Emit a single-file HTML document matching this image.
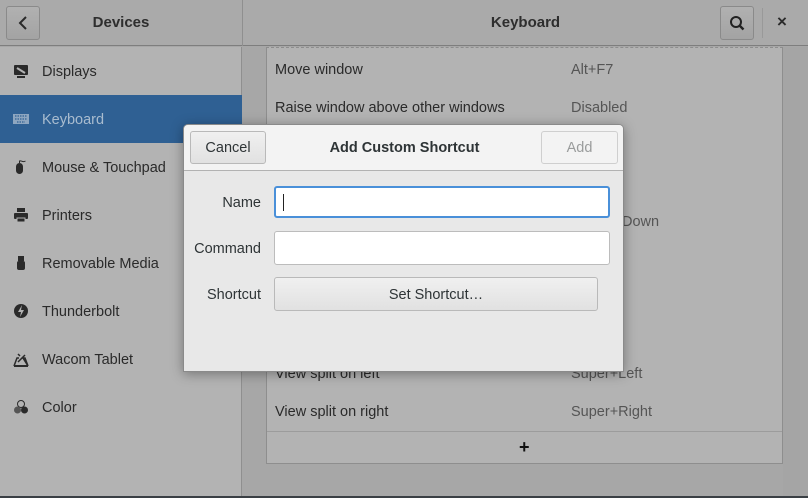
<!DOCTYPE html><html><head><style>
*{box-sizing:border-box}body{margin:0;width:808px;height:498px;overflow:hidden;font-family:"Liberation Sans",sans-serif;font-size:14.5px;color:#2a2a2a;background:#a7a7a7;position:relative}
.a{position:absolute}
.hdr{left:0;top:0;width:808px;height:46px;background:#aaaaaa;border-bottom:1px solid #7e7e7e}
.side{left:0;top:47px;width:242px;height:451px;background:#b3b3b3;border-right:1px solid #8f8f8f}
.item{position:absolute;left:0;width:242px;height:48px;line-height:50px;padding-left:42px}
.ic{position:absolute;left:13px;top:16px;width:16px;height:16px}
.btn{position:absolute;border:1px solid #8a8a8a;border-radius:3px;background:linear-gradient(#b1b1b1,#a3a3a3)}
.row{position:absolute;left:275px}
.acc{position:absolute;left:571px;color:#555}
.dlg{left:183px;top:124px;width:441px;height:248px;background:#e8e8e8;border:1px solid #8a8a8a;border-radius:5px 5px 0 0;box-shadow:0 2px 12px rgba(0,0,0,.35);overflow:hidden}
.db{position:absolute;border:1px solid #b9b9b9;border-radius:3px;background:linear-gradient(#f0f0f0,#e1e1e1);text-align:center;color:#2e3436}
.lbl{position:absolute;right:362px;color:#2e3436}
.ent{position:absolute;left:90px;width:336px;background:#fff;border:1px solid #bcbcbc;border-radius:3px}
</style></head><body>
<div class="a hdr"></div>
<div class="btn" style="left:6px;top:6px;width:34px;height:34px"><svg width="32" height="32" style="position:absolute;left:0;top:0"><path d="M19 10l-6 6 6 6" fill="none" stroke="#2a2a2a" stroke-width="2"/></svg></div>
<div class="a" style="left:0;width:242px;top:14px;text-align:center;font-weight:bold;color:#2e2e2e;font-size:15px">Devices</div>
<div class="a" style="left:242px;top:0;width:1px;height:46px;background:#8f8f8f"></div>
<div class="a" style="left:243px;width:565px;top:14px;text-align:center;font-weight:bold;color:#2e2e2e;font-size:15px">Keyboard</div>
<div class="btn" style="left:720px;top:6px;width:34px;height:34px"><svg width="32" height="32" style="position:absolute"><circle cx="15" cy="15" r="5" fill="none" stroke="#222" stroke-width="2"/><path d="M18.5 18.5l4 4" stroke="#222" stroke-width="2.4"/></svg></div>
<div class="a" style="left:762px;top:8px;width:1px;height:30px;background:#999"></div>
<div class="a" style="left:777px;top:12px;font-weight:bold;font-size:17px">×</div>
<div class="a side">
<div class="item" style="top:0"><svg class="ic" viewBox="0 0 16 16"><rect x="1" y="2" width="14" height="10" rx="1" fill="#2a2a2a"/><path d="M4 5l8 5" stroke="#b3b3b3" stroke-width="2"/><rect x="4" y="13" width="8" height="2" fill="#2a2a2a"/></svg>Displays</div>
<div class="item" style="top:48px;background:#2f6093;color:#a9bccf"><svg class="ic" viewBox="0 0 16 16"><rect x="0" y="3" width="16" height="10" fill="#8ea6c0"/><path d="M2 5h12M2 8h12M4 11h8" stroke="#2f6093" stroke-dasharray="1.5 1" stroke-width="1.2"/></svg>Keyboard</div>
<div class="item" style="top:96px"><svg class="ic" viewBox="0 0 16 16"><rect x="3" y="4" width="7" height="11" rx="3.5" fill="#2a2a2a"/><path d="M6.5 4V2c2-1 3 2 6 0" fill="none" stroke="#2a2a2a"/></svg>Mouse &amp; Touchpad</div>
<div class="item" style="top:144px"><svg class="ic" viewBox="0 0 16 16"><rect x="4" y="1" width="8" height="4" fill="#2a2a2a"/><rect x="1" y="6" width="14" height="6" rx="1" fill="#2a2a2a"/><rect x="4" y="11" width="8" height="4" fill="#2a2a2a" stroke="#b3b3b3"/></svg>Printers</div>
<div class="item" style="top:192px"><svg class="ic" viewBox="0 0 16 16"><rect x="5" y="1" width="6" height="5" fill="#2a2a2a"/><rect x="4" y="6" width="8" height="9" rx="2" fill="#2a2a2a"/></svg>Removable Media</div>
<div class="item" style="top:240px"><svg class="ic" viewBox="0 0 16 16"><circle cx="8" cy="8" r="7" fill="#2a2a2a"/><path d="M9 2L5 9h3l-1 5 4-7H8z" fill="#b3b3b3"/></svg>Thunderbolt</div>
<div class="item" style="top:288px"><svg class="ic" viewBox="0 0 16 16"><path d="M1 15l3-8h2M10 7h2l3 8z" fill="none" stroke="#2a2a2a" stroke-width="1.5"/><path d="M5 11l7-7M5 3l2 2" stroke="#2a2a2a" stroke-width="1.5"/><rect x="1" y="14" width="14" height="2" fill="#2a2a2a"/></svg>Wacom Tablet</div>
<div class="item" style="top:336px"><svg class="ic" viewBox="0 0 16 16"><circle cx="8" cy="5" r="3.5" fill="none" stroke="#2a2a2a"/><circle cx="4.5" cy="11" r="3.5" fill="#555"/><circle cx="11.5" cy="11" r="3.5" fill="#2a2a2a"/></svg>Color</div>
</div>
<div class="a" style="left:266px;top:47px;width:517px;height:417px;background:#b3b3b3;border:1px solid #8e8e8e;border-top:1px dashed #8e8e8e"></div>
<div class="a" style="left:783px;top:47px;width:25px;height:450px;background:#a5a5a5"></div>
<div class="a" style="left:0;top:496px;width:808px;height:2px;background:#3a3f44"></div>
<div class="row" style="top:62px">Move window</div><div class="acc" style="top:62px">Alt+F7</div>
<div class="row" style="top:100px">Raise window above other windows</div><div class="acc" style="top:100px">Disabled</div>
<div class="acc" style="top:214px;left:622px">Down</div>
<div class="row" style="top:366px">View split on left</div><div class="acc" style="top:366px">Super+Left</div>
<div class="row" style="top:404px">View split on right</div><div class="acc" style="top:404px">Super+Right</div>
<div class="a" style="left:267px;top:431px;width:515px;height:1px;background:#9c9c9c"></div>
<div class="a" style="left:519px;top:437px;font-size:18px;font-weight:bold;color:#111">+</div>
<div class="a dlg">
<div class="a" style="left:0;top:0;width:441px;height:46px;background:#f3f3f3;border-bottom:1px solid #b2b2b2"></div>
<div class="db" style="left:6px;top:6px;width:76px;height:33px;line-height:33px">Cancel</div>
<div class="a" style="left:0;width:441px;top:15px;text-align:center;font-weight:bold;color:#2e3436">Add Custom Shortcut</div>
<div class="db" style="left:357px;top:6px;width:77px;height:33px;line-height:33px;background:#f3f3f3;color:#9a9c9c;border-color:#cfcfcf">Add</div>
<div class="lbl" style="top:70px">Name</div>
<div class="ent" style="top:61px;height:32px;border:2px solid #4a90d9"><div class="a" style="left:7px;top:6px;width:1px;height:17px;background:#222"></div></div>
<div class="lbl" style="top:116px">Command</div>
<div class="ent" style="top:106px;height:34px"></div>
<div class="lbl" style="top:162px">Shortcut</div>
<div class="db" style="left:90px;top:152px;width:324px;height:34px;line-height:34px">Set Shortcut…</div>
</div>
</body></html>
